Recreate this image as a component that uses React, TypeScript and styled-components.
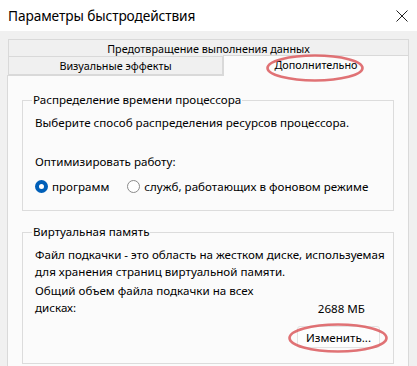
import React from "react";
import styled, { createGlobalStyle } from "styled-components";

const GlobalStyle = createGlobalStyle`
  html, body {
    margin: 0;
    padding: 0;
    background: #f0f0f0;
  }
  body {
    font-family: "Noto Sans", "Liberation Sans", sans-serif;
    font-size: 11.6px;
    color: #000;
  }
`;

const Window = styled.div`
  width: 417px;
  height: 366px;
  overflow: hidden;
  background: #f0f0f0;
  display: flex;
  flex-direction: column;
`;

const TitleBar = styled.div`
  height: 31px;
  background: #ffffff;
  display: flex;
  align-items: center;
  justify-content: space-between;
  padding: 0 9px 0 8px;
  flex-shrink: 0;
`;

const Title = styled.div`
  font-size: 13.7px;
  letter-spacing: -0.1px;
  margin-top: -1px;
`;

const Body = styled.div`
  flex: 1;
  padding: 8px 8px 0 7px;
  display: flex;
  flex-direction: column;
`;

const TabRow = styled.div`
  display: flex;
  margin-left: 1px;
  height: 18px;
  align-items: flex-end;
`;

const Tab = styled.div<{ $active?: boolean; $width?: string; $under?: boolean }>`
  box-sizing: border-box;
  position: relative;
  flex: ${(p) => (p.$width ? `0 0 ${p.$width}` : "1")};
  height: ${(p) => (p.$active ? "21px" : "18px")};
  margin-bottom: ${(p) => (p.$active ? "-1px" : "0")};
  background: ${(p) => (p.$active ? "#fbfbfb" : "#f0f0f0")};
  border: 1px solid #d9d9d9;
  border-top: ${(p) => (p.$under ? "none" : "1px solid #d9d9d9")};
  border-bottom: ${(p) => (p.$active ? "none" : "1px solid #d9d9d9")};
  display: flex;
  align-items: center;
  justify-content: center;
  padding-bottom: ${(p) => (p.$active ? "3px" : "0")};
  z-index: ${(p) => (p.$active ? 2 : 1)};
  font-size: 10.8px;
  white-space: nowrap;
`;

const Panel = styled.div`
  flex: 1;
  background: #fbfbfb;
  border: 1px solid #d9d9d9;
  border-bottom: none;
  padding: 16px 14px 0 14px;
  position: relative;
  z-index: 1;
`;

const Group = styled.fieldset<{ $gap?: string }>`
  margin: ${(p) => p.$gap || "0"} 0 0 0;
  border: 1px solid #dcdcdc;
  padding: 6px 12px 15px 12px;
  min-width: 0;
`;

const Legend = styled.legend`
  padding: 0 1px;
  margin-left: -3px;
  line-height: 16px;
`;

const Text = styled.div<{ $top?: string }>`
  line-height: 17px;
  white-space: nowrap;
  margin-top: ${(p) => p.$top || "0"};
`;

const RadioRow = styled.div`
  display: flex;
  align-items: center;
  gap: 18px;
  margin-top: 8px;
  height: 17px;
`;

const RadioLabel = styled.label`
  display: flex;
  align-items: center;
  gap: 4px;
  white-space: nowrap;
`;

const RadioDot = styled.span<{ $checked?: boolean }>`
  box-sizing: border-box;
  width: 13px;
  height: 13px;
  border-radius: 50%;
  background: #fff;
  border: ${(p) => (p.$checked ? "4px solid #005fb8" : "1px solid #8a8a8a")};
`;

const SizeRow = styled.div`
  display: flex;
  align-items: flex-end;
  justify-content: space-between;
  margin-top: 3px;
  padding-right: 16px;
`;

const SizeLabel = styled.div`
  width: 232px;
  line-height: 16.5px;
`;

const ButtonRow = styled.div`
  display: flex;
  justify-content: flex-end;
  margin-top: 10px;
  padding-right: 1px;
`;

const ButtonWrap = styled.div`
  position: relative;
`;

const Button = styled.button`
  font-family: inherit;
  font-size: 11.6px;
  width: 83px;
  height: 22px;
  background: #fdfdfd;
  border: 1px solid #e3e3e3;
  border-radius: 3px;
  color: #000;
  padding: 0;
`;

const Mark = styled.svg`
  position: absolute;
  pointer-events: none;
  overflow: visible;
  z-index: 3;
`;

const Ellipse = ({ w, h, left, top }: { w: number; h: number; left: number; top: number }) => (
  <Mark width={w} height={h} style={{ left, top }} viewBox={`0 0 ${w} ${h}`}>
    <defs>
      <filter id={`soft${w}`} x="-10%" y="-30%" width="120%" height="160%">
        <feGaussianBlur stdDeviation="0.7" />
      </filter>
    </defs>
    <ellipse
      cx={w / 2}
      cy={h / 2}
      rx={w / 2 - 1.5}
      ry={h / 2 - 1.5}
      fill="none"
      stroke="#dc5a5e"
      strokeOpacity="0.85"
      strokeWidth="2.6"
      filter={`url(#soft${w})`}
    />
  </Mark>
);

const CloseIcon = () => (
  <svg width="12" height="12" viewBox="0 0 12 12">
    <path d="M0.5 0.5 L11.5 11.5 M11.5 0.5 L0.5 11.5" stroke="#222" strokeWidth="1" fill="none" />
  </svg>
);

export default function App() {
  return (
    <>
      <GlobalStyle />
      <Window>
        <TitleBar>
          <Title>Параметры быстродействия</Title>
          <CloseIcon />
        </TitleBar>
        <Body>
          <TabRow>
            <Tab>Предотвращение выполнения данных</Tab>
          </TabRow>
          <TabRow>
            <Tab $width="215px" $under>Визуальные эффекты</Tab>
            <Tab $active>
              Дополнительно
              <Ellipse w={98} h={28} left={42} top={-2} />
            </Tab>
          </TabRow>
          <Panel>
            <Group>
              <Legend>Распределение времени процессора</Legend>
              <Text>Выберите способ распределения ресурсов процессора.</Text>
              <Text $top="22px">Оптимизировать работу:</Text>
              <RadioRow>
                <RadioLabel>
                  <RadioDot $checked />
                  программ
                </RadioLabel>
                <RadioLabel>
                  <RadioDot />
                  служб, работающих в фоновом режиме
                </RadioLabel>
              </RadioRow>
            </Group>
            <Group $gap="13px">
              <Legend>Виртуальная память</Legend>
              <Text>Файл подкачки - это область на жестком диске, используемая</Text>
              <Text>для хранения страниц виртуальной памяти.</Text>
              <SizeRow>
                <SizeLabel>Общий объем файла подкачки на всех дисках:</SizeLabel>
                <div>2688 МБ</div>
              </SizeRow>
              <ButtonRow>
                <ButtonWrap>
                  <Button>Изменить...</Button>
                  <Ellipse w={100} h={30} left={-9} top={-3} />
                </ButtonWrap>
              </ButtonRow>
            </Group>
          </Panel>
        </Body>
      </Window>
    </>
  );
}
